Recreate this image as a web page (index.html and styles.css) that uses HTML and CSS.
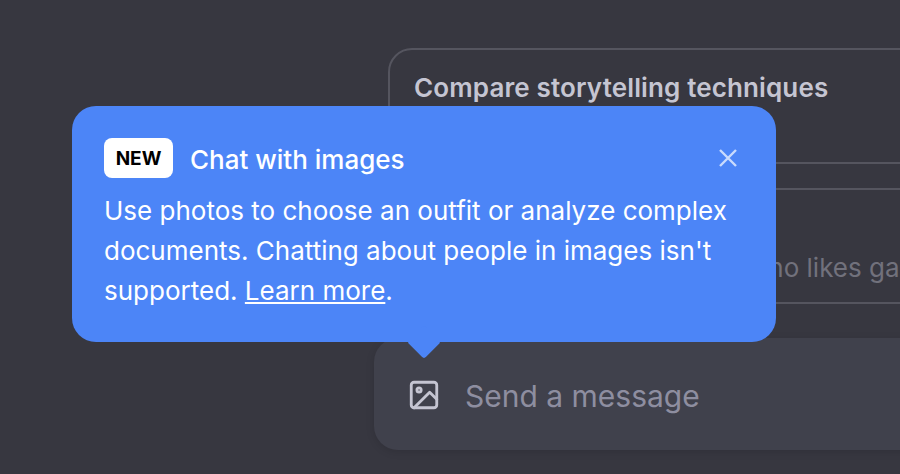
FILE: index.html
```html
<!DOCTYPE html>
<html>
<head>
    <title>Chat with images</title>
    <link rel="stylesheet" href="styles.css">
</head>
<body>
    <div class="page">
        <div class="examples">
            <div class="example">
                <div class="example-title">Compare storytelling techniques</div>
            </div>
            <div class="example">
                <div class="example-spacer"></div>
                <div class="example-sub">Plan a dinner for my friend who likes gardening</div>
            </div>
        </div>

        <div class="composer">
            <svg class="composer-icon" viewBox="0 0 24 24" fill="none" stroke="currentColor" stroke-width="2" stroke-linecap="round" stroke-linejoin="round">
                <rect x="3" y="3" width="18" height="18" rx="2"></rect>
                <circle cx="8.5" cy="8.5" r="1.5"></circle>
                <polyline points="21 15 16 10 5 21"></polyline>
            </svg>
            <span class="composer-placeholder">Send a message</span>
        </div>

        <div class="popover">
            <div class="popover-arrow"></div>
            <div class="popover-head">
                <span class="badge">NEW</span>
                <span class="popover-title">Chat with images</span>
                <svg class="popover-close" viewBox="0 0 18 18" fill="none" stroke="currentColor" stroke-width="2.4">
                    <path d="M1 1L17 17M17 1L1 17"></path>
                </svg>
            </div>
            <p class="popover-text">Use photos to choose an outfit or analyze complex documents. Chatting about people in images isn't supported. <a href="#">Learn more</a>.</p>
        </div>
    </div>
</body>
</html>
```

FILE: styles.css
```css
body {
    margin: 0;
    background-color: #373740;
    font-family: Inter, "Liberation Sans", sans-serif;
}

.page {
    position: relative;
    width: 900px;
    height: 474px;
    overflow: hidden;
    padding-top: 48px;
    box-sizing: border-box;
}

.examples {
    display: flex;
    flex-direction: column;
    gap: 24px;
    width: 800px;
    margin-left: 388px;
}

.example {
    height: 116px;
    box-sizing: border-box;
    padding: 20px 24px;
    border: 2px solid #55555f;
    border-radius: 24px;
}

.example-title {
    font-size: 26px;
    font-weight: 600;
    line-height: 36px;
    color: #c5c5d2;
    letter-spacing: 0.13px;
}

.example-spacer {
    height: 36px;
}

.example-sub {
    margin-top: 4px;
    font-size: 26px;
    line-height: 36px;
    color: #71717c;
    white-space: nowrap;
}

.composer {
    display: flex;
    align-items: center;
    gap: 24px;
    width: 800px;
    height: 112px;
    box-sizing: border-box;
    margin: 34px 0 0 374px;
    padding: 2px 0 0 33px;
    background-color: #40414c;
    border-radius: 24px;
    box-shadow: 0 2px 8px rgba(0, 0, 0, 0.12);
}

.composer-icon {
    width: 34px;
    height: 34px;
    color: #c5c5d2;
}

.composer-placeholder {
    padding-top: 2px;
    font-size: 30px;
    color: #8e8ea0;
}

.popover {
    position: absolute;
    left: 72px;
    top: 106px;
    width: 704px;
    height: 236px;
    box-sizing: border-box;
    padding: 32px;
    background-color: #4c85f7;
    border-radius: 24px;
    color: #ffffff;
}

.popover-arrow {
    position: absolute;
    left: 340px;
    bottom: -12px;
    width: 24px;
    height: 24px;
    background-color: #4c85f7;
    border-radius: 3px;
    transform: rotate(45deg);
}

.popover-head {
    display: flex;
    align-items: center;
    height: 40px;
}

.badge {
    display: flex;
    align-items: center;
    justify-content: center;
    width: 69px;
    height: 40px;
    background-color: #ffffff;
    border-radius: 8px;
    color: #000000;
    font-size: 19px;
    font-weight: 700;
}

.popover-title {
    margin-left: 17px;
    padding-top: 3px;
    font-size: 26px;
    font-weight: 500;
}

.popover-close {
    width: 18px;
    height: 18px;
    margin-left: auto;
    margin-right: 7px;
    color: rgba(255, 255, 255, 0.7);
}

.popover-text {
    margin: 13px 0 0;
    font-size: 26px;
    line-height: 40px;
}

.popover-text a {
    color: #ffffff;
}
```
